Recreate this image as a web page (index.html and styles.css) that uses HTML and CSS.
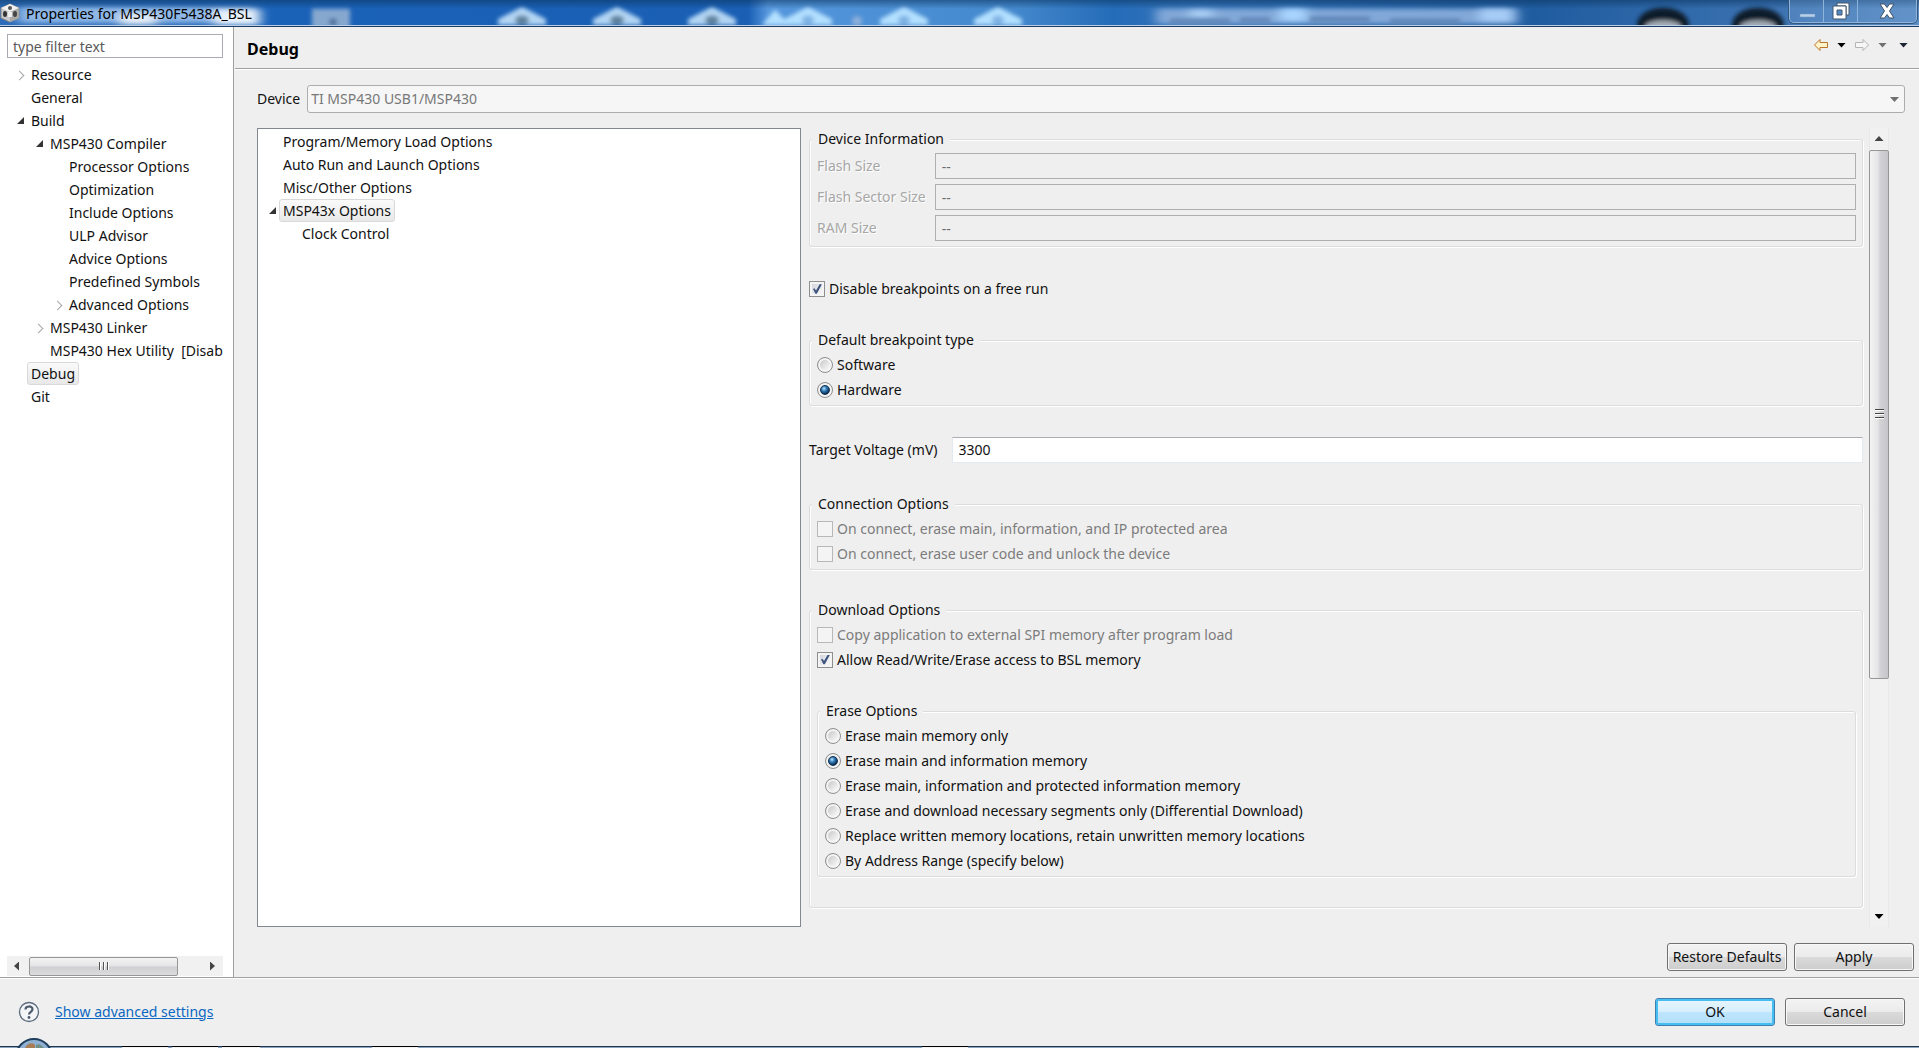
FILE: index.html
```
<!DOCTYPE html>
<html lang="en">
<head>
<meta charset="utf-8">
<title>Properties for MSP430F5438A_BSL</title>
<link rel="stylesheet" href="styles.css">
</head>
<body>
<header class="titlebar">
  <svg class="glass" viewBox="0 0 1919 26" preserveAspectRatio="none" aria-hidden="true">
    <defs>
      <filter id="b2" x="-20%" y="-60%" width="140%" height="220%"><feGaussianBlur stdDeviation="2"/></filter>
      <filter id="b5" x="-20%" y="-100%" width="140%" height="300%"><feGaussianBlur stdDeviation="6 3"/></filter>
      <linearGradient id="sky" x1="0" x2="1" y1="0" y2="0">
        <stop offset="0" stop-color="#2c6cba"/><stop offset=".14" stop-color="#1a62b8"/><stop offset=".39" stop-color="#1a5fb4"/>
        <stop offset=".4" stop-color="#5596dc"/><stop offset=".53" stop-color="#4388cc"/><stop offset=".58" stop-color="#256cb8"/>
        <stop offset=".62" stop-color="#3272b8"/><stop offset=".8" stop-color="#1f5c9f"/><stop offset=".92" stop-color="#3a71b0"/><stop offset="1" stop-color="#5d8fc6"/>
      </linearGradient>
      <linearGradient id="edge" x1="0" x2="0" y1="0" y2="1">
        <stop offset="0" stop-color="#0b3560" stop-opacity=".55"/><stop offset=".35" stop-color="#0b3560" stop-opacity="0"/>
      </linearGradient>
      <g id="cube"><path d="M-24 26V20L0 7L24 20V26Z" fill="#b4d6f4"/><ellipse cx="0" cy="21" rx="7" ry="5" fill="#5f809c"/></g>
      <g id="cubeLight"><path d="M-24 26V20L0 7L24 20V26Z" fill="#b3e0ff"/><ellipse cx="0" cy="21" rx="6" ry="5" fill="#7fb2e4"/></g>
    </defs>
    <rect width="1919" height="26" fill="url(#sky)"/>
    <g filter="url(#b5)">
      <rect x="18" y="7" width="238" height="17" fill="#8fb8e6"/>
      <rect x="120" y="14" width="36" height="12" fill="#e3ecf6"/>
      <rect x="214" y="10" width="46" height="16" fill="#e8f2fc"/>
      <rect x="1156" y="9" width="362" height="16" fill="#82a8d8"/>
      <rect x="1480" y="8" width="32" height="15" fill="#a6ccf6"/>
      <rect x="1280" y="8" width="26" height="14" fill="#a8d4ff"/>
      <rect x="1190" y="9" width="22" height="10" fill="#a8cdf4"/>
    </g>
    <g filter="url(#b2)">
      <rect x="312" y="9" width="38" height="20" fill="#86a8cf"/>
      <circle cx="333" cy="23" r="4" fill="#4c7199"/>
      <use href="#cube" x="522"/><use href="#cube" x="617"/><use href="#cube" x="712"/>
      <path d="M762 26L775 10L790 26Z" fill="#b3e0ff"/>
      <use href="#cubeLight" x="808"/><use href="#cubeLight" x="904"/><use href="#cubeLight" x="998"/>
      <circle cx="857" cy="22" r="5" fill="#8fb0dc"/>
      <path d="M1170 22h60M1240 21h30M1310 20h60M1390 22h70" stroke="#5c83b4" stroke-width="5"/>
      <ellipse cx="1663" cy="26" rx="26" ry="18" fill="#0e1c2a"/><ellipse cx="1663" cy="28" rx="18" ry="7" fill="#a4adb6"/>
      <ellipse cx="1758" cy="26" rx="26" ry="18" fill="#0e1c2a"/><ellipse cx="1758" cy="28" rx="18" ry="7" fill="#a4adb6"/>
    </g>
    <rect width="1919" height="26" fill="url(#edge)"/>
  </svg>
  <svg class="app-icon" width="20" height="20" viewBox="0 0 20 20" aria-hidden="true">
    <path d="M10 1L19 5V15L10 19L1 15V5Z" fill="#c9c9c9" stroke="#8b8b8b"/>
    <path d="M10 1L19 5L10 9L1 5Z" fill="#f1f1f1"/><path d="M10 9L19 5V15L10 19Z" fill="#a9a9a9"/>
    <circle cx="10" cy="5" r="2" fill="#555"/><ellipse cx="5" cy="11" rx="2" ry="3" fill="#333"/><ellipse cx="15" cy="11" rx="2" ry="3" fill="#444"/><path d="M8 9h4v5h-4z" fill="#eee"/>
  </svg>
  <h1 class="title">Properties for MSP430F5438A_BSL</h1>
  <div class="caption">
    <button class="cap" type="button" aria-label="Minimize"><svg width="18" height="18" viewBox="0 0 18 18"><path d="M2 12h15v3H2z" fill="#b7cfe8" stroke="#6d92bd" stroke-width=".5"/></svg></button>
    <button class="cap" type="button" aria-label="Restore"><svg width="20" height="18" viewBox="0 0 20 18"><path d="M6 1H18V13H15V4H6Z" fill="#fff" stroke="#41566e"/><path d="M2 4H15V17H2ZM6 8V13H11V8Z" fill="#fff" fill-rule="evenodd" stroke="#41566e"/></svg></button>
    <button class="cap cap-close" type="button" aria-label="Close"><svg width="18" height="16" viewBox="0 0 18 16"><path d="M2 1H6.500L9 4.500L11.500 1H16L11.500 8L16 15H11.500L9 11.500L6.500 15H2L6.500 8Z" fill="#fff" stroke="#3f536b"/></svg></button>
  </div>
</header>

<div class="body">
  <nav class="sidebar" aria-label="Property pages">
    <input class="filter" type="text" placeholder="type filter text" aria-label="Filter">
    <ul class="tree">
      <li class="node"><i class="closed"></i><span class="item">Resource</span></li>
      <li class="node"><span class="item">General</span></li>
      <li class="node"><i class="open"></i><span class="item">Build</span></li>
      <li><ul>
        <li class="node"><i class="open"></i><span class="item">MSP430 Compiler</span></li>
        <li><ul>
          <li class="node"><span class="item">Processor Options</span></li>
          <li class="node"><span class="item">Optimization</span></li>
          <li class="node"><span class="item">Include Options</span></li>
          <li class="node"><span class="item">ULP Advisor</span></li>
          <li class="node"><span class="item">Advice Options</span></li>
          <li class="node"><span class="item">Predefined Symbols</span></li>
          <li class="node"><i class="closed"></i><span class="item">Advanced Options</span></li>
        </ul></li>
        <li class="node"><i class="closed"></i><span class="item">MSP430 Linker</span></li>
        <li class="node"><span class="item">MSP430 Hex Utility&nbsp; [Disabled]</span></li>
      </ul></li>
      <li class="node"><span class="item selected">Debug</span></li>
      <li class="node"><span class="item">Git</span></li>
    </ul>
    <div class="hscroll">
      <i class="tri left"></i>
      <div class="htrack"><div class="hthumb"><i></i><i></i><i></i></div></div>
      <i class="tri right"></i>
    </div>
  </nav>

  <main class="page">
    <div class="page-head">
      <h2 class="page-title">Debug</h2>
      <div class="history">
        <button class="tool" type="button" aria-label="Back"><svg width="16" height="14" viewBox="0 0 16 14"><path d="M1.500 7L7 1.500V4.500H14.500V9.500H7V12.500Z" fill="#fff3c9" stroke="#b9772b" stroke-linejoin="round"/></svg></button>
        <button class="tool" type="button" aria-label="Back history"><i class="tri down black"></i></button>
        <button class="tool" type="button" aria-label="Forward" disabled><svg width="16" height="14" viewBox="0 0 16 14"><path d="M14.500 7L9 1.500V4.500H1.500V9.500H9V12.500Z" fill="#f6f6f6" stroke="#b4b4b4" stroke-linejoin="round"/></svg></button>
        <button class="tool" type="button" aria-label="Forward history" disabled><i class="tri down grey"></i></button>
        <button class="tool view-menu" type="button" aria-label="Menu"><i class="tri down navy"></i></button>
      </div>
    </div>

    <div class="device">
      <label for="device">Device</label>
      <div class="combo">
        <select id="device" disabled><option>TI MSP430 USB1/MSP430</option></select>
        <i class="tri down grey combo-arrow"></i>
      </div>
    </div>

    <div class="split">
      <ul class="tree options">
        <li class="node"><span class="item">Program/Memory Load Options</span></li>
        <li class="node"><span class="item">Auto Run and Launch Options</span></li>
        <li class="node"><span class="item">Misc/Other Options</span></li>
        <li class="node"><i class="open"></i><span class="item selected">MSP43x Options</span></li>
        <li><ul><li class="node"><span class="item">Clock Control</span></li></ul></li>
      </ul>

      <div class="scroller">
        <form class="form">
          <fieldset class="group info">
            <legend>Device Information</legend>
            <div class="info-grid">
              <label for="flash">Flash Size</label><input id="flash" type="text" value="--" disabled>
              <label for="sector">Flash Sector Size</label><input id="sector" type="text" value="--" disabled>
              <label for="ram">RAM Size</label><input id="ram" type="text" value="--" disabled>
            </div>
          </fieldset>

          <label class="check single"><input type="checkbox" checked>Disable breakpoints on a free run</label>

          <fieldset class="group">
            <legend>Default breakpoint type</legend>
            <label class="check"><input type="radio" name="bp">Software</label>
            <label class="check"><input type="radio" name="bp" checked>Hardware</label>
          </fieldset>

          <div class="voltage">
            <label for="mv">Target Voltage (mV)</label>
            <input id="mv" type="text" value="3300">
          </div>

          <fieldset class="group">
            <legend>Connection Options</legend>
            <label class="check off"><input type="checkbox" disabled>On connect, erase main, information, and IP protected area</label>
            <label class="check off"><input type="checkbox" disabled>On connect, erase user code and unlock the device</label>
          </fieldset>

          <fieldset class="group download">
            <legend>Download Options</legend>
            <label class="check off"><input type="checkbox" disabled>Copy application to external SPI memory after program load</label>
            <label class="check"><input type="checkbox" checked>Allow Read/Write/Erase access to BSL memory</label>
            <fieldset class="group erase">
              <legend>Erase Options</legend>
              <label class="check"><input type="radio" name="erase">Erase main memory only</label>
              <label class="check"><input type="radio" name="erase" checked>Erase main and information memory</label>
              <label class="check"><input type="radio" name="erase">Erase main, information and protected information memory</label>
              <label class="check"><input type="radio" name="erase">Erase and download necessary segments only (Differential Download)</label>
              <label class="check"><input type="radio" name="erase">Replace written memory locations, retain unwritten memory locations</label>
              <label class="check"><input type="radio" name="erase">By Address Range (specify below)</label>
            </fieldset>
          </fieldset>
        </form>
        <div class="vscroll">
          <i class="tri up"></i>
          <div class="vtrack"><div class="vthumb"><i></i><i></i><i></i></div></div>
          <i class="tri down black"></i>
        </div>
      </div>
    </div>

    <div class="page-actions">
      <button class="btn" type="button">Restore Defaults</button>
      <button class="btn" type="button">Apply</button>
    </div>
  </main>
</div>

<footer class="footer">
  <button class="tool" type="button" aria-label="Help"><svg width="22" height="22" viewBox="0 0 22 22"><circle cx="11" cy="11" r="9.500" fill="#f4f5f7" stroke="#5b6b7d" stroke-width="1.300"/><path d="M7.500 8.500C7.500 4.500 14.500 4.500 14.500 8.300C14.500 10.800 11 10.800 11 13.500" fill="none" stroke="#4c5b6c" stroke-width="2.200"/><circle cx="11" cy="16.500" r="1.400" fill="#4c5b6c"/></svg></button>
  <a class="advanced" href="#">Show advanced settings</a>
  <div class="confirm">
    <button class="btn primary" type="button">OK</button>
    <button class="btn" type="button">Cancel</button>
  </div>
</footer>

<div class="taskbar" aria-hidden="true">
  <svg class="orb" width="36" height="10" viewBox="0 0 36 10"><circle cx="18" cy="19" r="18" fill="#8fb0d2" stroke="#1f3d5c" stroke-width="2"/><path d="M9 10C11 5 17 4 19 7V10Z" fill="#a87d54"/><path d="M20 10V7C23 5 26 8 28 10Z" fill="#6e8f86"/></svg>
  <i class="task t1"></i><i class="task t2"></i><i class="task t3"></i><i class="task t4"></i><i class="task t5"></i>
</div>
</body>
</html>
```
FILE: styles.css
```
* { box-sizing: border-box; }
body {
  margin: 0;
  min-height: 100vh;
  display: flex;
  flex-direction: column;
  background: #efefef;
  color: #111;
  font: 14px/22px "Noto Sans", "Open Sans", sans-serif;
}
ul { list-style: none; margin: 0; padding: 0; }
input, select, button { font: inherit; color: inherit; margin: 0; }
button { cursor: default; }

/* Title bar */
.titlebar {
  position: relative;
  height: 27px;
  display: flex;
  align-items: center;
  gap: 6px;
  border-bottom: 1px solid #1d3d66;
  box-shadow: inset 0 -1px #b9cfe6;
  overflow: hidden;
}
.glass { position: absolute; inset: 0; width: 100%; height: 25px; }
.app-icon, .title, .caption { position: relative; }
.title { margin: 0; padding-top: 2px; font-size: 14px; font-weight: 400; color: #000; }
.caption {
  display: flex;
  align-self: flex-start;
  height: 23px;
  margin-left: auto;
  margin-right: 2px;
  border: 1px solid #8fb4dc;
  border-top: 0;
  border-radius: 0 0 5px 5px;
  box-shadow: 0 0 0 1px #33587f;
}
.cap {
  width: 34px;
  padding: 0;
  display: flex;
  align-items: center;
  justify-content: center;
  border: 0;
  border-right: 1px solid #8fb4dc;
  background: rgba(110, 155, 205, .35);
}
.cap-close { width: 58px; border-right: 0; }

/* Layout */
.body { flex: 1; display: flex; }
.sidebar {
  width: 234px;
  padding: 7px 10px 1px 7px;
  display: flex;
  flex-direction: column;
  background: #fff;
  border-right: 1px solid #a0a0a0;
}
.filter {
  height: 24px;
  padding: 0 5px;
  border: 1px solid #a9abb0;
  background: #fff;
}
.filter::placeholder { color: #595959; opacity: 1; }
.page { flex: 1; min-width: 0; display: flex; flex-direction: column; padding-left: 1px; }

/* Trees */
.tree { padding-left: 24px; overflow: hidden; }
.sidebar .tree { flex: 1; width: 216px; padding-top: 5px; }
.tree ul { padding-left: 19px; }
.node { position: relative; height: 23px; display: flex; white-space: nowrap; }
.item { height: 23px; line-height: 21px; padding: 0 3px; margin-left: -4px; border: 1px solid transparent; }
.selected { border-color: #d9d9d9; border-radius: 3px; background: linear-gradient(#fafafa, #e8e8e8); }
.closed, .open { position: absolute; left: -17px; top: 6px; width: 12px; height: 12px; }
.closed::before {
  content: "";
  position: absolute;
  left: 2px;
  top: 3px;
  width: 6px;
  height: 6px;
  border: solid #a6a6a6;
  border-width: 1px 1px 0 0;
  transform: rotate(45deg);
}
.open::before {
  content: "";
  position: absolute;
  left: 3px;
  top: 2px;
  width: 7px;
  height: 7px;
  background: #333;
  clip-path: polygon(100% 0, 100% 100%, 0 100%);
}
.options { background: #fff; border: 1px solid #828790; padding: 1px 0 0 25px; }

/* Arrow heads */
.tri { display: block; flex: none; width: 9px; height: 5px; background: #444; }
.down { clip-path: polygon(0 0, 100% 0, 50% 100%); }
.up { clip-path: polygon(50% 0, 100% 100%, 0 100%); }
.left { width: 5px; height: 9px; clip-path: polygon(100% 0, 100% 100%, 0 50%); }
.right { width: 5px; height: 9px; clip-path: polygon(0 0, 100% 50%, 0 100%); }
.black { background: #000; }
.grey { background: #707070; }
.navy { background: #1d2433; }

/* Scroll bars */
.hscroll { height: 20px; display: flex; align-items: center; justify-content: space-between; gap: 10px; padding: 0 8px 0 7px; background: #f1f1f1; }
.htrack { flex: 1; height: 19px; padding-right: 22px; }
.hthumb {
  height: 19px;
  display: flex;
  align-items: center;
  justify-content: center;
  gap: 2px;
  border: 1px solid #979797;
  border-radius: 2px;
  background: linear-gradient(#f3f3f3, #e4e4e6 48%, #cfcfd1 52%, #dcdcdd);
}
.hthumb i { width: 2px; height: 8px; border-left: 1px solid #555; background: #fff; }
.vscroll {
  width: 20px;
  display: flex;
  flex-direction: column;
  align-items: center;
  gap: 9px;
  padding: 8px 0;
  background: #f1f1f1;
  border: solid #e8e8e8;
  border-width: 0 1px;
}
.vtrack { flex: 1; width: 20px; }
.vthumb {
  height: 70%;
  display: flex;
  flex-direction: column;
  align-items: center;
  justify-content: center;
  gap: 2px;
  border: 1px solid #979797;
  border-radius: 2px;
  background: linear-gradient(90deg, #f3f3f3, #e4e4e6 45%, #d3d3d6 55%, #c6c6ca);
}
.vthumb i { width: 9px; height: 2px; border-top: 1px solid #444; background: #fff; }

/* Page header */
.page-head {
  height: 42px;
  display: flex;
  align-items: center;
  justify-content: space-between;
  padding: 0 11px 0 12px;
  border-bottom: 1px solid #a0a0a0;
  box-shadow: 0 1px #fff;
}
.page-title { margin: 0; padding-top: 3px; font-size: 16px; font-weight: 700; color: #000; }
.history { display: flex; align-items: center; gap: 8px; padding-bottom: 5px; }
.view-menu { margin-left: 4px; }
.tool { display: flex; padding: 0; border: 0; background: none; }
.device { display: flex; align-items: center; gap: 7px; padding: 16px 14px 15px 22px; }
.combo { position: relative; flex: 1; }
.combo select {
  display: block;
  width: 100%;
  height: 28px;
  padding: 0 3px;
  appearance: none;
  border: 1px solid #adadad;
  border-radius: 3px;
  background: #f6f6f6;
  color: #787878;
  opacity: 1;
}
.combo-arrow { position: absolute; right: 6px; top: 12px; }

.split {
  flex: 1;
  display: grid;
  grid-template-columns: 544fr 1080fr;
  gap: 8px;
  padding: 0 30px 0 22px;
}
.scroller { display: flex; gap: 6px; }
.form { flex: 1; min-width: 0; display: flex; flex-direction: column; gap: 29px; }

/* Groups */
.group {
  margin: 0;
  min-width: 0;
  padding: 1px 6px 3px 7px;
  border: 1px solid #dcdcdc;
  border-radius: 3px;
  box-shadow: inset 1px 1px #fff, 1px 1px #fff;
}
.group legend { height: 22px; margin-left: -5px; padding: 0 6px; background: #efefef; }
.info { padding-top: 3px; padding-bottom: 5px; }
.info-grid { display: grid; grid-template-columns: max-content 1fr; gap: 5px 9px; align-items: center; }
.info-grid label { color: #a6a6a6; text-shadow: 1px 1px #fff; }
.info-grid input {
  height: 26px;
  min-width: 0;
  padding: 0 6px;
  border: 1px solid #afafaf;
  background: #efefef;
  color: #6d6d6d;
}
.check { height: 25px; display: flex; align-items: center; gap: 4px; white-space: nowrap; }
.single { height: 24px; padding-top: 2px; }
.off { color: #7c7c7c; }
.download { padding-bottom: 30px; }
.erase { margin-top: 28px; }

.voltage { display: flex; align-items: center; gap: 14px; height: 29px; }
.voltage input {
  flex: 1;
  min-width: 0;
  height: 26px;
  padding: 0 6px;
  border: 1px solid #e3e9ef;
  border-top-color: #abadb3;
  background: #fff;
}

/* Tick boxes and radios */
.check input {
  position: relative;
  flex: none;
  width: 16px;
  height: 16px;
  appearance: none;
  border: 1px solid #8e8f8f;
  background: linear-gradient(135deg, #c9ced6, #f3f3f3 70%);
  box-shadow: inset 0 0 0 2px #f4f4f4;
}
.check input:disabled { border-color: #b8b8b8; background: #f4f4f4; }
.check input[type="checkbox"]:checked::after {
  content: "";
  position: absolute;
  inset: 2px;
  background: #3f547e;
  clip-path: polygon(10% 50%, 25% 42%, 40% 65%, 78% 0, 98% 5%, 48% 98%, 34% 98%);
}
.check input[type="radio"] { border-radius: 50%; background: linear-gradient(135deg, #bdbdbd, #f4f4f4 75%); }
.check input[type="radio"]:checked::after {
  content: "";
  position: absolute;
  inset: 2px;
  border: 1px solid #16304f;
  border-radius: 50%;
  background: radial-gradient(circle at 38% 32%, #bfe4f8, #2e7cba 35%, #0d2c52 75%);
}

/* Buttons */
.btn {
  width: 120px;
  height: 28px;
  padding: 0;
  border: 1px solid #707070;
  border-radius: 3px;
  background: linear-gradient(#f3f3f3, #ebebeb 49%, #dadada 51%, #cdcdcd);
  box-shadow: inset 0 0 0 1px #f8f8f8;
  white-space: nowrap;
}
.primary {
  border-color: #3c7fb1;
  background: linear-gradient(#e8f6fe, #d6effd 49%, #bee6fd 51%, #b2dffa);
  box-shadow: inset 0 0 0 2px #48bdf0;
}
.page-actions { display: flex; justify-content: flex-end; gap: 7px; padding: 16px 5px 6px; }

.footer {
  height: 69px;
  display: flex;
  align-items: center;
  gap: 15px;
  padding: 0 14px 1px 18px;
  border-top: 1px solid #a0a0a0;
  box-shadow: inset 0 1px #fff;
}
.advanced { color: #0b67c2; }
.confirm { display: flex; gap: 10px; margin-left: auto; }

/* Sliver of the desktop taskbar */
.taskbar { position: relative; height: 2px; background: #8ba3bd; border-top: 1px solid #1f3650; }
.orb { position: absolute; left: 16px; bottom: 0; }
.task { position: absolute; top: -1px; height: 2px; width: 46px; background: #f2f2f2; border-top: 1px solid #000; }
.t1 { left: 122px; }
.t2 { left: 172px; }
.t3 { left: 222px; width: 38px; }
.t4 { left: 372px; }
.t5 { left: 922px; }
```
